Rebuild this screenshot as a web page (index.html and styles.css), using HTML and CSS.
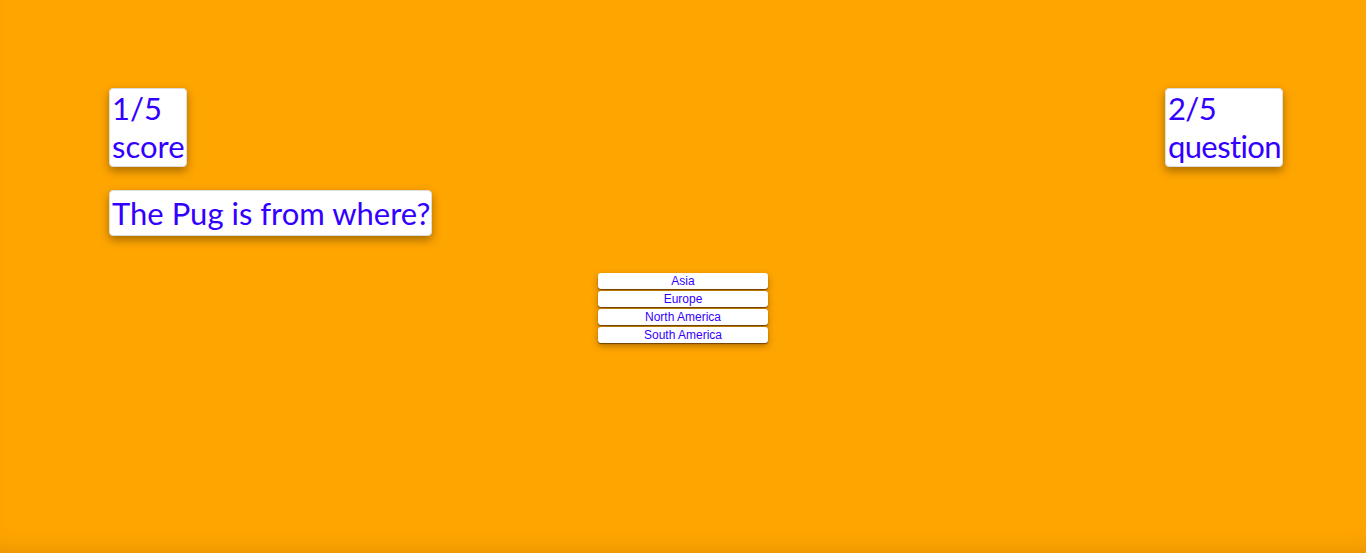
FILE: index.html
```html
<!DOCTYPE html>
<html>
<head>
<meta charset="utf-8">
<link rel="stylesheet" href="styles.css">
</head>
<body>
<div class="page">
  <div class="header">
    <div class="card stat"><div>1/5</div><div>score</div></div>
    <div class="card stat stat-wide"><div>2/5</div><div>question</div></div>
  </div>
  <div class="card question">The Pug is from where?</div>
  <div class="answers">
    <button class="answer">Asia</button>
    <button class="answer">Europe</button>
    <button class="answer">North America</button>
    <button class="answer">South America</button>
  </div>
</div>
</body>
</html>
```
FILE: styles.css
```css
html, body {
  margin: 0;
  padding: 0;
}
body {
  background: #ffa500;
  height: 553px;
  overflow: hidden;
}
.page {
  height: 553px;
  box-sizing: border-box;
  padding-top: 88px;
  box-shadow: inset 0 -18px 24px -18px rgba(0,0,0,0.14);
  display: flex;
  flex-direction: column;
  align-items: flex-start;
}
.header {
  align-self: stretch;
  display: flex;
  justify-content: space-between;
  align-items: flex-start;
  padding: 0 83px 0 109px;
}
.card {
  background: #fff;
  border: 1px solid #dcdcdc;
  border-radius: 4px;
  box-shadow: 0 4px 10px rgba(0,0,0,0.35);
  color: #3300ff;
  font-family: "Lato", "Open Sans", sans-serif;
  font-variant-ligatures: none;
  font-size: 31px;
  line-height: 38px;
  padding: 0 1px 0 2px;
}
.stat {
  height: 77px;
}
.stat-wide {
  letter-spacing: -0.6px;
}
.question {
  margin: 23px 0 0 109px;
  height: 44px;
  line-height: 44px;
}
.answers {
  align-self: center;
  margin-top: 37px;
  width: 170px;
  display: flex;
  flex-direction: column;
  gap: 2px;
}
.answer {
  display: block;
  width: 170px;
  height: 16px;
  margin: 0;
  padding: 0;
  border: none;
  border-radius: 3px;
  background: #fff;
  color: #3300ff;
  font-family: "Liberation Sans", Arial, sans-serif;
  font-size: 12px;
  line-height: 16px;
  box-shadow: 0 1px 1px rgba(80,40,0,0.7), 0 3px 7px rgba(0,0,0,0.3);
}
```
